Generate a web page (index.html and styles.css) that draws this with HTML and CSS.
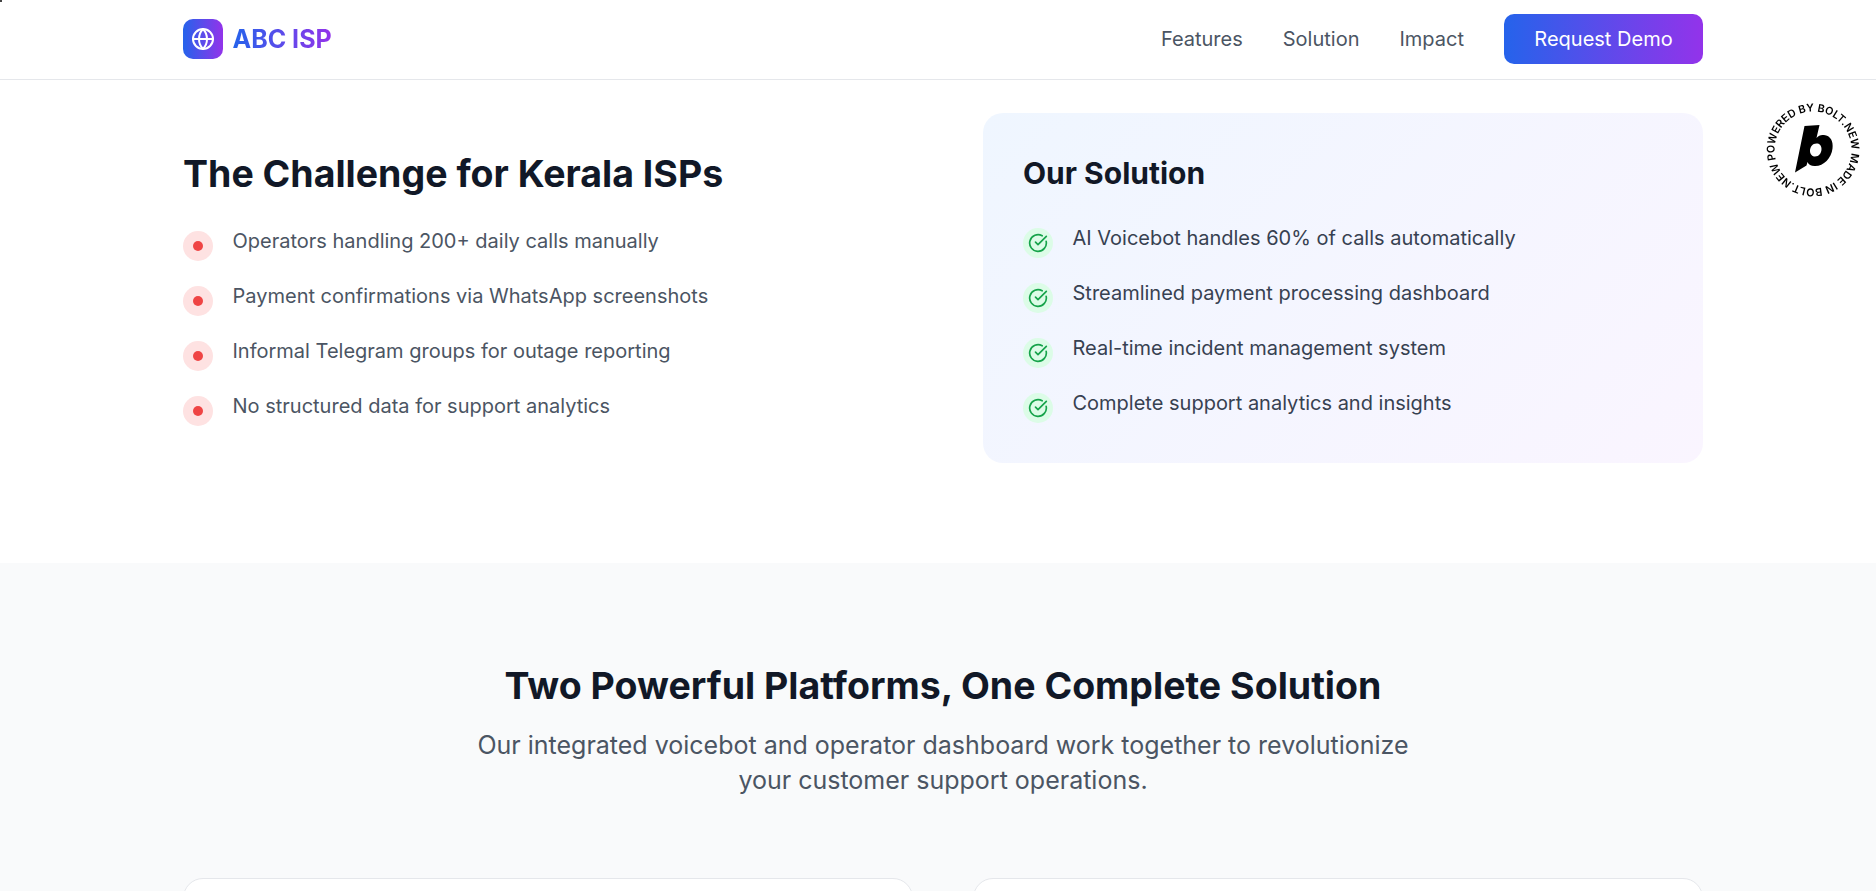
FILE: index.html
```html
<!DOCTYPE html>
<html lang="en">
<head>
    <meta charset="UTF-8">
    <title>ABC ISP</title>
    <link rel="stylesheet" href="styles.css">
</head>
<body>
    <nav class="nav">
        <div class="nav-inner">
            <a class="brand" href="#">
                <span class="brand-icon">
                    <svg width="24" height="24" viewBox="0 0 24 24" fill="none" stroke="#fff" stroke-width="2" stroke-linecap="round" stroke-linejoin="round">
                        <circle cx="12" cy="12" r="10"/>
                        <path d="M12 2a14.5 14.5 0 0 0 0 20 14.5 14.5 0 0 0 0-20"/>
                        <path d="M2 12h20"/>
                    </svg>
                </span>
                <span class="brand-name">ABC ISP</span>
            </a>
            <div class="nav-links">
                <a href="#">Features</a>
                <a href="#">Solution</a>
                <a href="#">Impact</a>
                <button class="demo-btn">Request Demo</button>
            </div>
        </div>
    </nav>

    <section class="challenge">
        <div class="challenge-grid">
            <div class="problem">
                <h2>The Challenge for Kerala ISPs</h2>
                <ul class="list">
                    <li><span class="dot-icon"><i></i></span><span>Operators handling 200+ daily calls manually</span></li>
                    <li><span class="dot-icon"><i></i></span><span>Payment confirmations via WhatsApp screenshots</span></li>
                    <li><span class="dot-icon"><i></i></span><span>Informal Telegram groups for outage reporting</span></li>
                    <li><span class="dot-icon"><i></i></span><span>No structured data for support analytics</span></li>
                </ul>
            </div>
            <div class="solution-card">
                <h3>Our Solution</h3>
                <ul class="list">
                    <li><span class="check-icon"><svg width="20" height="20" viewBox="0 0 24 24" fill="none" stroke="#16a34a" stroke-width="2" stroke-linecap="round" stroke-linejoin="round"><path d="M21.8 10A10 10 0 1 1 17 3.34"/><path d="m9 11 3 3L22 4"/></svg></span><span>AI Voicebot handles 60% of calls automatically</span></li>
                    <li><span class="check-icon"><svg width="20" height="20" viewBox="0 0 24 24" fill="none" stroke="#16a34a" stroke-width="2" stroke-linecap="round" stroke-linejoin="round"><path d="M21.8 10A10 10 0 1 1 17 3.34"/><path d="m9 11 3 3L22 4"/></svg></span><span>Streamlined payment processing dashboard</span></li>
                    <li><span class="check-icon"><svg width="20" height="20" viewBox="0 0 24 24" fill="none" stroke="#16a34a" stroke-width="2" stroke-linecap="round" stroke-linejoin="round"><path d="M21.8 10A10 10 0 1 1 17 3.34"/><path d="m9 11 3 3L22 4"/></svg></span><span>Real-time incident management system</span></li>
                    <li><span class="check-icon"><svg width="20" height="20" viewBox="0 0 24 24" fill="none" stroke="#16a34a" stroke-width="2" stroke-linecap="round" stroke-linejoin="round"><path d="M21.8 10A10 10 0 1 1 17 3.34"/><path d="m9 11 3 3L22 4"/></svg></span><span>Complete support analytics and insights</span></li>
                </ul>
            </div>
        </div>
    </section>

    <section class="platforms">
        <h2>Two Powerful Platforms, One Complete Solution</h2>
        <p>Our integrated voicebot and operator dashboard work together to revolutionize your customer support operations.</p>
        <div class="platform-grid">
            <div class="platform-card"></div>
            <div class="platform-card"></div>
        </div>
    </section>

    <a class="bolt-badge" href="#">
        <svg width="96" height="96" viewBox="0 0 96 96">
            <defs>
                <path id="ring" d="M48 48m-38.5 0a38.5 38.5 0 1 1 77 0a38.5 38.5 0 1 1-77 0"/>
            </defs>
            <text class="bolt-text" transform="rotate(-15 48 48)"><textPath href="#ring">POWERED BY BOLT.NEW MADE IN BOLT.NEW</textPath></text>
            <path d="M39.5 24 L54.5 23 L51.5 36 C53.5 33.5 56 32.5 59 33 C65.5 33.5 68.5 39.5 67.5 46.5 C66.5 56.5 58 64.5 49.5 64 C46 64 43.5 62.5 42.5 60 L41.5 63.5 L30 70.5 Z M51.5 41.5 C47.5 41.5 45 45 45 49 C45 52.5 47.5 54.5 50 54.5 C54 54.5 56.5 51 56.5 47 C56.5 43.5 54.5 41.5 51.5 41.5 Z" fill="#000" fill-rule="evenodd"/>
        </svg>
    </a>
</body>
</html>
```

FILE: styles.css
```css
* {
    box-sizing: border-box;
    margin: 0;
    padding: 0;
}
html, body {
    height: 100%;
    overflow: hidden;
}
body {
    font-family: 'Inter', 'Liberation Sans', sans-serif;
    background: #fff;
    color: #111827;
}
/* tiny cursor remnant in the corner of the capture */
body::before {
    content: '';
    position: fixed;
    top: 0;
    left: 0;
    width: 2px;
    height: 2px;
    background: #444;
}
a {
    text-decoration: none;
    color: inherit;
}
ul {
    list-style: none;
}

/* nav */
.nav {
    height: 80px;
    border-bottom: 1px solid #e5e7eb;
    background: #fff;
    padding: 0 173px 1px 183px;
}
.nav-inner {
    height: 100%;
    display: flex;
    align-items: center;
    justify-content: space-between;
}
.brand {
    display: flex;
    align-items: center;
    gap: 9.5px;
}
.brand-icon {
    width: 40px;
    height: 40px;
    border-radius: 10px;
    background: linear-gradient(to right, #2563eb, #9333ea);
    display: flex;
    align-items: center;
    justify-content: center;
}
.brand-name {
    font-size: 25px;
    font-weight: 700;
    background: linear-gradient(to right, #2563eb, #9333ea);
    -webkit-background-clip: text;
    background-clip: text;
    color: transparent;
}
.nav-links {
    display: flex;
    align-items: center;
    gap: 40px;
    font-size: 20px;
    color: #4b5563;
}
.demo-btn {
    width: 199px;
    height: 50px;
    border: none;
    border-radius: 10px;
    background: linear-gradient(to right, #2563eb, #9333ea);
    color: #fff;
    font-family: inherit;
    font-size: 20px;
    font-weight: 400;
}

/* challenge */
.challenge {
    height: 483px;
    padding: 33px 173px 0 183px;
}
.challenge-grid {
    display: grid;
    grid-template-columns: 720px 720px;
    gap: 80px;
}
.problem {
    padding-top: 38px;
}
.problem h2 {
    font-size: 37.5px;
    line-height: 45px;
    font-weight: 700;
    margin-bottom: 31px;
}
.solution-card {
    height: 350px;
    padding: 40px;
    border-radius: 20px;
    background: linear-gradient(135deg, #eff6ff, #faf5ff);
}
.solution-card h3 {
    font-size: 30px;
    line-height: 40px;
    font-weight: 700;
    margin-bottom: 31px;
}
.list li {
    display: flex;
    align-items: flex-start;
    gap: 19.5px;
    height: 55px;
    font-size: 20px;
    line-height: 28px;
    color: #4b5563;
}
.solution-card .list li {
    color: #374151;
}
.dot-icon, .check-icon {
    flex: none;
    width: 30px;
    height: 30px;
    border-radius: 50%;
    margin-top: 4px;
    display: flex;
    align-items: center;
    justify-content: center;
}
.dot-icon {
    background: #fee2e2;
}
.dot-icon i {
    width: 10px;
    height: 10px;
    border-radius: 50%;
    background: #ef4444;
}
.check-icon {
    background: #dcfce7;
}

/* platforms */
.platforms {
    height: 400px;
    padding: 100px 173px 0 183px;
    background: #f9fafb;
    text-align: center;
}
.platforms h2 {
    font-size: 37.5px;
    line-height: 45px;
    font-weight: 700;
    margin-bottom: 20px;
}
.platforms p {
    width: 1000px;
    margin: 0 auto;
    padding: 0 20px;
    font-size: 25px;
    line-height: 35px;
    color: #4b5563;
}
.platform-grid {
    display: grid;
    grid-template-columns: 730px 730px;
    gap: 60px;
    margin-top: 80px;
}
.platform-card {
    height: 300px;
    background: #fff;
    border: 1px solid #e5e7eb;
    border-radius: 20px;
}

/* badge */
.bolt-badge {
    position: fixed;
    top: 102px;
    right: 15px;
    width: 96px;
    height: 96px;
}
.bolt-text {
    font-family: 'Inter', 'Liberation Sans', sans-serif;
    font-size: 10.8px;
    font-weight: 600;
    fill: #000;
}
```
